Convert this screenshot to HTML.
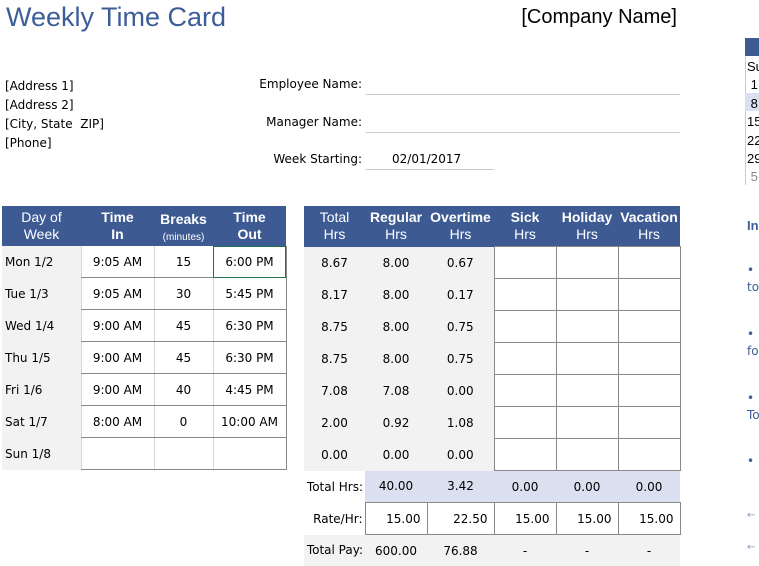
<!DOCTYPE html>
<html><head><meta charset="utf-8"><style>
body{margin:0;width:759px;height:561px;overflow:hidden;background:#fff;font-family:"DejaVu Sans","Liberation Sans",sans-serif;font-size:12px;color:#000;position:relative}
.a{position:absolute;white-space:nowrap}
table{border-collapse:collapse;position:absolute;table-layout:fixed}
td{padding:0;text-align:center;height:31px;font-size:12px}
th{background:#3d5a93;color:#fff;font-family:"Liberation Sans",Arial,sans-serif;font-size:14px;line-height:17px;height:40px;padding:0}
th.n{font-weight:normal}
th small{font-size:10px;font-weight:normal}
.g{background:#f2f2f2}
.lb td.c{border-bottom:1px solid #888;border-left:1px solid #d6d6d6}
.lb td.r{border-right:1px solid #888}
.bx{border:1px solid #888}
.line{position:absolute;height:1px;background:#ccc}
.t td.b{background:#dae0ef}
</style></head><body>
<div class="a" style="left:6px;top:0;font-family:'Liberation Sans',Arial,sans-serif;font-size:27px;color:#3d5d98;line-height:34px">Weekly Time Card</div>
<div class="a" style="right:82px;top:4px;font-family:'Liberation Sans',Arial,sans-serif;font-size:20px;line-height:26px">[Company Name]</div>
<div class="a" style="left:5px;top:77px;line-height:19px">[Address 1]<br>[Address 2]<br>[City, State&nbsp; ZIP]<br>[Phone]</div>
<div class="a" style="right:397px;top:77px">Employee Name:</div>
<div class="a" style="right:397px;top:115px">Manager Name:</div>
<div class="a" style="right:397px;top:152px">Week Starting:</div>
<div class="line" style="left:366px;top:94px;width:314px"></div>
<div class="line" style="left:366px;top:132px;width:314px"></div>
<div class="line" style="left:366px;top:169px;width:128px"></div>
<div class="a" style="left:392px;top:152px">02/01/2017</div>

<table class="lb" style="left:2px;top:206px;width:284px">
<colgroup><col style="width:79px"><col style="width:73px"><col style="width:59px"><col style="width:73px"></colgroup>
<tr><th class="n">Day of<br>Week</th><th>Time<br>In</th><th><div style="margin-top:3px;line-height:17px">Breaks</div><div style="line-height:14px"><small>(minutes)</small></div></th><th>Time<br>Out</th></tr>
<tr><td class="g" style="text-align:left;padding-left:3px">Mon 1/2</td><td class="c">9:05 AM</td><td class="c">15</td><td class="c r" style="outline:1px solid #217346;outline-offset:-1px">6:00 PM</td></tr>
<tr><td class="g" style="text-align:left;padding-left:3px">Tue 1/3</td><td class="c">9:05 AM</td><td class="c">30</td><td class="c r">5:45 PM</td></tr>
<tr><td class="g" style="text-align:left;padding-left:3px">Wed 1/4</td><td class="c">9:00 AM</td><td class="c">45</td><td class="c r">6:30 PM</td></tr>
<tr><td class="g" style="text-align:left;padding-left:3px">Thu 1/5</td><td class="c">9:00 AM</td><td class="c">45</td><td class="c r">6:30 PM</td></tr>
<tr><td class="g" style="text-align:left;padding-left:3px">Fri 1/6</td><td class="c">9:00 AM</td><td class="c">40</td><td class="c r">4:45 PM</td></tr>
<tr><td class="g" style="text-align:left;padding-left:3px">Sat 1/7</td><td class="c">8:00 AM</td><td class="c">0</td><td class="c r">10:00 AM</td></tr>
<tr><td class="g" style="text-align:left;padding-left:3px">Sun 1/8</td><td class="c"></td><td class="c"></td><td class="c r"></td></tr>
</table>

<table class="t" style="left:304px;top:206px;width:376px">
<colgroup><col style="width:61px"><col style="width:62px"><col style="width:67px"><col style="width:62px"><col style="width:62px"><col style="width:62px"></colgroup>
<tr><th class="n">Total<br>Hrs</th><th>Regular<br><span style="font-weight:normal">Hrs</span></th><th>Overtime<br><span style="font-weight:normal">Hrs</span></th><th>Sick<br><span style="font-weight:normal">Hrs</span></th><th>Holiday<br><span style="font-weight:normal">Hrs</span></th><th>Vacation<br><span style="font-weight:normal">Hrs</span></th></tr>
<tr><td class="g">8.67</td><td class="g">8.00</td><td class="g">0.67</td><td class="bx"></td><td class="bx"></td><td class="bx"></td></tr>
<tr><td class="g">8.17</td><td class="g">8.00</td><td class="g">0.17</td><td class="bx"></td><td class="bx"></td><td class="bx"></td></tr>
<tr><td class="g">8.75</td><td class="g">8.00</td><td class="g">0.75</td><td class="bx"></td><td class="bx"></td><td class="bx"></td></tr>
<tr><td class="g">8.75</td><td class="g">8.00</td><td class="g">0.75</td><td class="bx"></td><td class="bx"></td><td class="bx"></td></tr>
<tr><td class="g">7.08</td><td class="g">7.08</td><td class="g">0.00</td><td class="bx"></td><td class="bx"></td><td class="bx"></td></tr>
<tr><td class="g">2.00</td><td class="g">0.92</td><td class="g">1.08</td><td class="bx"></td><td class="bx"></td><td class="bx"></td></tr>
<tr><td class="g">0.00</td><td class="g">0.00</td><td class="g">0.00</td><td class="bx"></td><td class="bx"></td><td class="bx"></td></tr>
<tr><td style="text-align:right;padding-right:2px;overflow:visible">Total&nbsp;Hrs:</td><td class="b">40.00</td><td class="b">3.42</td><td class="b">0.00</td><td class="b">0.00</td><td class="b">0.00</td></tr>
<tr><td style="text-align:right;padding-right:2px">Rate/Hr:</td><td class="bx" style="text-align:right;padding-right:6px">15.00</td><td class="bx" style="text-align:right;padding-right:6px">22.50</td><td class="bx" style="text-align:right;padding-right:6px">15.00</td><td class="bx" style="text-align:right;padding-right:6px">15.00</td><td class="bx" style="text-align:right;padding-right:6px">15.00</td></tr>
<tr><td class="g" style="text-align:right;padding-right:2px">Total&nbsp;Pay:</td><td class="g">600.00</td><td class="g">76.88</td><td class="g">-</td><td class="g">-</td><td class="g">-</td></tr>
</table>

<div class="a" style="left:745px;top:38px;width:14px;height:18px;background:#3d5a93"></div>
<div class="a" style="left:745px;top:56px;width:14px;height:129px;border-left:1px solid #ccc"></div>
<div class="a" style="left:745px;top:93px;width:14px;height:18px;background:#dae0ef"></div>
<div class="a" style="left:747px;top:58px;line-height:18.4px;font-family:'Liberation Sans',Arial,sans-serif;font-size:13px">Su<br>&nbsp;1<br>&nbsp;8<br>15<br>22<br>29<br><span style="color:#888">&nbsp;5</span></div>
<div class="a" style="left:747px;top:218px;color:#3d5d98;font-weight:bold;font-family:'Liberation Sans',Arial,sans-serif;font-size:13px">In</div>
<div class="a" style="left:747px;top:262px;color:#3d5d98;font-size:12px;line-height:17px">• I<br>to</div>
<div class="a" style="left:747px;top:326px;color:#3d5d98;font-size:12px;line-height:17px">• <br>fo</div>
<div class="a" style="left:747px;top:390px;color:#3d5d98;font-size:12px;line-height:17px">• <br>To</div>
<div class="a" style="left:747px;top:454px;color:#3d5d98;font-size:12px">• </div>
<div class="a" style="left:747px;top:510px;color:#8899bb;font-size:10px">←</div>
<div class="a" style="left:747px;top:542px;color:#8899bb;font-size:10px">←</div>
</body></html>
